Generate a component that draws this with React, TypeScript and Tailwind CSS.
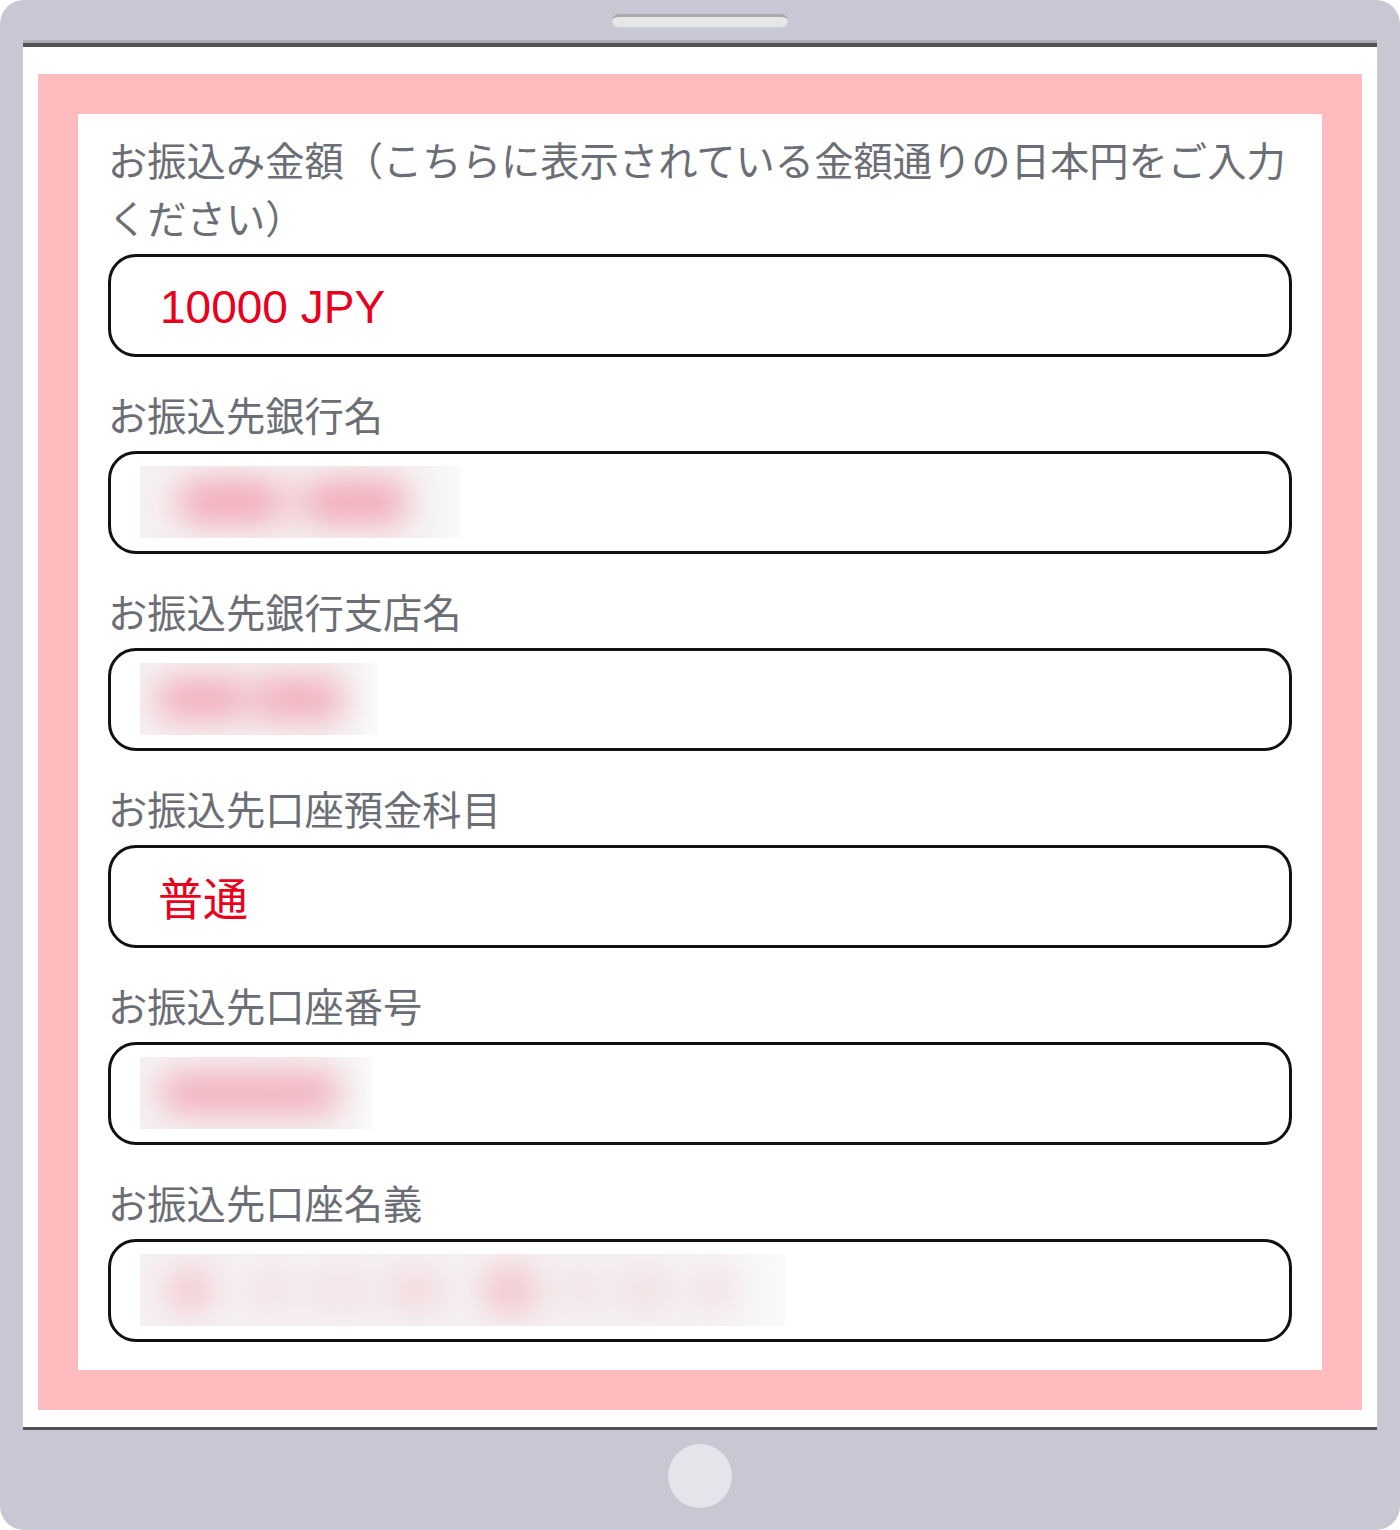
import React from "react";

type Blob = { x: number; w: number; h: number; o: number };

function Blurred({ width, blobs }: { width: number; blobs: Blob[] }) {
  return (
    <div
      className="relative h-[72px] overflow-hidden bg-[linear-gradient(to_right,#f5f0f1_0%,#f4f0f0_80%,#f6f4f4_92%,#fbfafa_100%)]"
      style={{ width }}
    >
      {blobs.map((b, i) => (
        <div
          key={i}
          className="absolute top-1/2 rounded-full bg-[#f29aab] blur-[16px]"
          style={{
            left: b.x - b.w / 2,
            width: b.w,
            height: b.h,
            marginTop: -b.h / 2,
            opacity: b.o,
          }}
        />
      ))}
    </div>
  );
}

function Field({
  label,
  first,
  children,
}: {
  label: string;
  first?: boolean;
  children: React.ReactNode;
}) {
  return (
    <div className={first ? "" : "mt-[28px]"}>
      <div className="mb-[7.5px] text-[39.3px] leading-[58px] text-[#6b6e75] [font-family:'Noto_Sans_CJK_JP','Noto_Sans',sans-serif]">
        {label}
      </div>
      <div className="flex h-[103.5px] items-center rounded-[28px] border-[3px] border-[#111111] bg-white pl-[29px]">
        {children}
      </div>
    </div>
  );
}

export default function App() {
  return (
    <div className="flex h-[1530px] w-[1400px] flex-col items-center rounded-[24px] bg-[#c8c8d4]">
      {/* top speaker */}
      <div className="flex h-[40px] w-full items-start justify-center pt-[14px]">
        <div className="h-[14px] w-[176px] rounded-full border-t-[3px] border-[#a9a9ad] bg-[#e7e7e9] shadow-[inset_0_-1px_0_#d0d0d4]" />
      </div>
      {/* screen */}
      <div className="flex w-[1354px] flex-col">
        <div className="h-[3px] bg-[#acacb2]" />
        <div className="h-[4px] bg-[#525252]" />
        <div className="bg-white px-[15px] pt-[27px] pb-[17px]">
          <div className="bg-[#ffbbbd] p-[40px]">
            <div className="bg-white px-[30px] pt-[16px] pb-[28px]">
              <Field first label="お振込み金額（こちらに表示されている金額通りの日本円をご入力ください）">
                <span className="pl-[20px] pt-[4px] text-[46px] leading-none text-[#e8001c] [font-family:'Liberation_Sans',Arial,sans-serif]">
                  10000 JPY
                </span>
              </Field>
              <Field label="お振込先銀行名">
                <Blurred
                  width={321}
                  blobs={[
                    { x: 87, w: 100, h: 44, o: 0.8 },
                    { x: 152, w: 70, h: 34, o: 0.35 },
                    { x: 218, w: 100, h: 44, o: 0.8 },
                  ]}
                />
              </Field>
              <Field label="お振込先銀行支店名">
                <Blurred
                  width={237}
                  blobs={[
                    { x: 60, w: 90, h: 42, o: 0.75 },
                    { x: 110, w: 50, h: 30, o: 0.35 },
                    { x: 160, w: 90, h: 42, o: 0.75 },
                  ]}
                />
              </Field>
              <Field label="お振込先口座預金科目">
                <span className="pl-[18px] text-[45px] leading-none text-[#e8001c] [font-family:'Noto_Sans_CJK_JP',sans-serif]">
                  普通
                </span>
              </Field>
              <Field label="お振込先口座番号">
                <Blurred
                  width={233}
                  blobs={[
                    { x: 110, w: 180, h: 40, o: 0.75 },
                  ]}
                />
              </Field>
              <Field label="お振込先口座名義">
                <Blurred
                  width={645}
                  blobs={[
                    { x: 50, w: 44, h: 44, o: 0.5 },
                    { x: 130, w: 44, h: 34, o: 0.2 },
                    { x: 200, w: 64, h: 34, o: 0.18 },
                    { x: 275, w: 56, h: 38, o: 0.28 },
                    { x: 370, w: 56, h: 48, o: 0.5 },
                    { x: 440, w: 44, h: 34, o: 0.18 },
                    { x: 505, w: 56, h: 34, o: 0.2 },
                    { x: 575, w: 44, h: 34, o: 0.25 },
                  ]}
                />
              </Field>
            </div>
          </div>
        </div>
        <div className="h-[3px] bg-[#525252]" />
      </div>
      {/* home button */}
      <div className="mt-[14px] h-[64px] w-[64px] rounded-full bg-[#e4e4ea]" />
    </div>
  );
}
